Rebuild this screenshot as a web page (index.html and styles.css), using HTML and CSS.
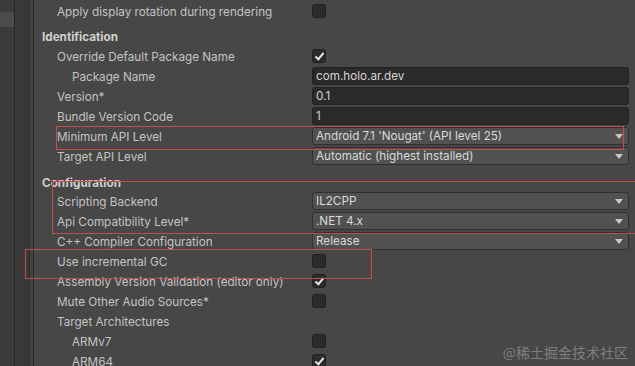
FILE: index.html
```html
<!DOCTYPE html>
<html lang="en">
<head>
    <meta charset="UTF-8">
    <meta name="viewport" content="width=device-width, initial-scale=1.0">
    <title>Player Settings</title>
    <link rel="stylesheet" href="styles.css">
</head>
<body>
    <div class="window">
        <div class="sidebar">
            <div class="sidebar-item selected"></div>
        </div>
        <div class="split"></div>
        <div class="panel"></div>
        <div class="gutter"></div>

        <div class="inspector">
            <div class="row">
                <span class="label">Apply display rotation during rendering</span>
                <span class="checkbox"></span>
            </div>

            <div class="row section">Identification</div>
            <div class="row">
                <span class="label">Override Default Package Name</span>
                <span class="checkbox checked"></span>
            </div>
            <div class="row">
                <span class="label sub">Package Name</span>
                <span class="textfield">com.holo.ar.dev</span>
            </div>
            <div class="row">
                <span class="label">Version*</span>
                <span class="textfield">0.1</span>
            </div>
            <div class="row">
                <span class="label">Bundle Version Code</span>
                <span class="textfield">1</span>
            </div>
            <div class="row">
                <span class="label">Minimum API Level</span>
                <span class="dropdown">Android 7.1 'Nougat' (API level 25)</span>
            </div>
            <div class="row">
                <span class="label">Target API Level</span>
                <span class="dropdown">Automatic (highest installed)</span>
            </div>

            <div class="row section section-config">Configuration</div>
            <div class="row">
                <span class="label">Scripting Backend</span>
                <span class="dropdown">IL2CPP</span>
            </div>
            <div class="row">
                <span class="label">Api Compatibility Level*</span>
                <span class="dropdown">.NET 4.x</span>
            </div>
            <div class="row">
                <span class="label">C++ Compiler Configuration</span>
                <span class="dropdown">Release</span>
            </div>
            <div class="row">
                <span class="label">Use incremental GC</span>
                <span class="checkbox"></span>
            </div>
            <div class="row">
                <span class="label">Assembly Version Validation (editor only)</span>
                <span class="checkbox checked"></span>
            </div>
            <div class="row">
                <span class="label">Mute Other Audio Sources*</span>
                <span class="checkbox"></span>
            </div>
            <div class="row">
                <span class="label">Target Architectures</span>
            </div>
            <div class="row">
                <span class="label sub">ARMv7</span>
                <span class="checkbox"></span>
            </div>
            <div class="row">
                <span class="label sub">ARM64</span>
                <span class="checkbox checked"></span>
            </div>
        </div>

        <!-- annotation boxes drawn over the screenshot -->
        <div class="mark mark-api"></div>
        <div class="mark mark-config"></div>
        <div class="mark mark-gc"></div>

        <div class="watermark">@稀土掘金技术社区</div>
    </div>
</body>
</html>
```

FILE: styles.css
```css
/* General Styles */
body {
    margin: 0;
    background-color: #474747;
    font-family: Inter, "Noto Sans CJK SC", sans-serif;
    font-size: 11.7px;
    color: #c4c4c4;
    overflow: hidden;
}

.window {
    position: relative;
    display: flex;
    width: 635px;
    height: 366px;
    overflow: hidden;
}

/* left editor columns */
.sidebar {
    width: 14px;
    background-color: #3b3b3b;
    padding-top: 12px;
}

.sidebar-item {
    height: 15px;
}

.sidebar-item.selected {
    background-color: #4b4b4b;
}

.split {
    width: 1px;
    background-color: #272727;
}

.panel {
    width: 14px;
    background-color: #383838;
    border-right: 1px solid #2e2e2e;
}

.gutter {
    width: 3px;
    background-color: #434343;
    border-right: 1px solid #2a2a2a;
}

/* inspector */
.inspector {
    flex: 1;
    padding-top: 2px;
    padding-right: 6px;
}

.row {
    display: flex;
    align-items: center;
    height: 20px;
}

.section {
    margin-top: 5px;
    padding-left: 8px;
    font-weight: bold;
    color: #d0d0d0;
}

.section-config {
    margin-top: 6px;
    margin-bottom: -1px;
}

.label {
    width: 255px;
    padding-left: 23px;
    flex-shrink: 0;
    white-space: nowrap;
}

.label.sub {
    width: 240px;
    padding-left: 38px;
}

.checkbox {
    position: relative;
    width: 12px;
    height: 12px;
    background-color: #2b2b2b;
    border: 1px solid #1f1f1f;
    border-radius: 3px;
    margin-top: -3px;
}

.checkbox.checked::after {
    content: "";
    position: absolute;
    left: 4px;
    top: 1px;
    width: 3px;
    height: 7px;
    border: solid #e4e4e4;
    border-width: 0 2px 2px 0;
    transform: rotate(40deg);
}

.textfield {
    flex: 1;
    height: 16px;
    line-height: 16px;
    padding-left: 3px;
    background-color: #2a2a2a;
    border: 1px solid #212121;
    border-radius: 3px;
    color: #d4d4d4;
    margin-top: -3px;
}

.dropdown {
    position: relative;
    flex: 1;
    height: 16px;
    line-height: 16px;
    padding-left: 3px;
    background-color: #515151;
    border: 1px solid #303030;
    border-radius: 3px;
    color: #dadada;
    margin-top: -3px;
}

.dropdown::after {
    content: "";
    position: absolute;
    right: 5px;
    top: 6px;
    border-left: 4px solid transparent;
    border-right: 4px solid transparent;
    border-top: 5px solid #c8c8c8;
}

/* red annotation frames */
.mark {
    position: absolute;
    border: 1px solid #cc4a4a;
}

.mark-api {
    left: 56px;
    top: 126px;
    width: 566px;
    height: 22px;
}

.mark-config {
    left: 52px;
    top: 181px;
    width: 600px;
    height: 51px;
}

.mark-gc {
    left: 25px;
    top: 249px;
    width: 345px;
    height: 28px;
}

.watermark {
    position: absolute;
    right: 7px;
    bottom: 4px;
    font-size: 14px;
    color: rgba(200, 200, 200, 0.45);
    font-family: "Noto Sans CJK SC", sans-serif;
}
```
